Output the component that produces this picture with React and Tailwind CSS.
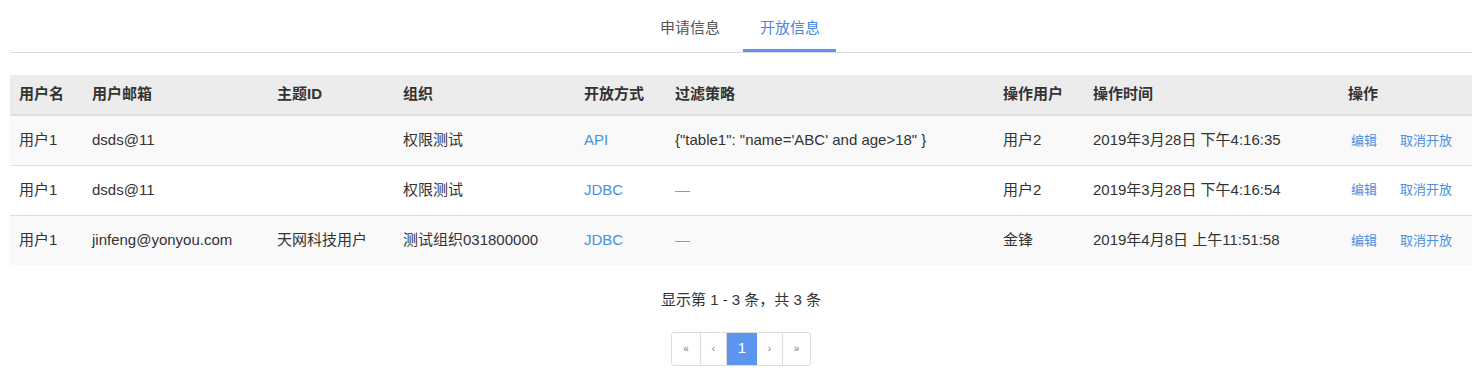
import React from 'react';

const cols = [
  { key: 'user', label: '用户名', w: 'w-[73px]' },
  { key: 'email', label: '用户邮箱', w: 'w-[185px]' },
  { key: 'topic', label: '主题ID', w: 'w-[126px]' },
  { key: 'org', label: '组织', w: 'w-[181px]' },
  { key: 'mode', label: '开放方式', w: 'w-[91px]' },
  { key: 'filter', label: '过滤策略', w: 'w-[328px]' },
  { key: 'opUser', label: '操作用户', w: 'w-[90px]' },
  { key: 'opTime', label: '操作时间', w: 'w-[255px]' },
  { key: 'action', label: '操作', w: 'w-[133px]' },
];

const rows = [
  {
    id: 1,
    user: '用户1',
    email: 'dsds@11',
    topic: '',
    org: '权限测试',
    mode: 'API',
    filter: '{"table1": "name=\'ABC\' and age>18" }',
    opUser: '用户2',
    opTime: '2019年3月28日 下午4:16:35',
  },
  {
    id: 2,
    user: '用户1',
    email: 'dsds@11',
    topic: '',
    org: '权限测试',
    mode: 'JDBC',
    filter: null,
    opUser: '用户2',
    opTime: '2019年3月28日 下午4:16:54',
  },
  {
    id: 3,
    user: '用户1',
    email: 'jinfeng@yonyou.com',
    topic: '天网科技用户',
    org: '测试组织031800000',
    mode: 'JDBC',
    filter: null,
    opUser: '金锋',
    opTime: '2019年4月8日 上午11:51:58',
  },
];

function Tabs() {
  return (
    <div className="flex justify-center border-b border-[#dcdcdc] ml-[10px] pr-[8px] h-[53px]">
      <div className="flex">
        <button className="pl-[22px] pr-[23px] pt-[4px] h-[52px] text-[15px] text-[#555]">申请信息</button>
        <button className="pl-[17px] pr-[16px] h-[52px] text-[15px] text-[#4a88e0] border-b-[3px] border-[#5b95ee] pt-[7px]">
          开放信息
        </button>
      </div>
    </div>
  );
}

function Pager() {
  const btn = 'h-8 flex items-center justify-center text-[10px] text-[#777] border-r border-[#ddd]';
  return (
    <div className="ml-[10px] flex flex-col items-center">
      <div className="mt-[24px] text-[15px] text-[#333]">显示第 1 - 3 条，共 3 条</div>
      <div className="mt-[20px] flex border border-[#ddd] rounded-[3px] overflow-hidden">
        <span className={`${btn} w-[29px]`}>«</span>
        <span className={`${btn} w-[26px]`}>‹</span>
        <span className="h-8 w-[30px] flex items-center justify-center text-[15px] text-white bg-[#5b95ee]">1</span>
        <span className={`${btn} w-[26px]`}>›</span>
        <span className="h-8 w-[27px] flex items-center justify-center text-[10px] text-[#777]">»</span>
      </div>
    </div>
  );
}

export default function App() {
  return (
    <div className="bg-white w-[1472px] h-[374px] overflow-hidden font-['Liberation_Sans','Noto_Sans_CJK_SC',sans-serif] text-[#333]">
      <Tabs />
      <div className="ml-[10px] mt-[22px]">
        <table className="w-[1462px] table-fixed border-collapse text-[15px]">
          <thead>
            <tr className="bg-[#ececec] h-[40px] border-b-2 border-[#dedede]">
              {cols.map((c) => (
                <th key={c.key} className={`${c.w} text-left font-bold pl-[9px] text-[#333]`}>
                  {c.label}
                </th>
              ))}
            </tr>
          </thead>
          <tbody>
            {rows.map((r, i) => (
              <tr
                key={r.id}
                className={`h-[50px] ${i % 2 === 0 ? 'bg-[#f9f9f9]' : 'bg-white'} ${
                  i < rows.length - 1 ? 'border-b border-[#dedede]' : ''
                }`}
              >
                <td className="pl-[9px]">{r.user}</td>
                <td className="pl-[9px]">{r.email}</td>
                <td className="pl-[9px]">{r.topic}</td>
                <td className="pl-[9px]">{r.org}</td>
                <td className="pl-[9px] text-[#4a90e2]">{r.mode}</td>
                <td className="pl-[9px]">{r.filter ? r.filter : <span className="text-[#999]">—</span>}</td>
                <td className="pl-[9px]">{r.opUser}</td>
                <td className="pl-[9px]">{r.opTime}</td>
                <td className="pl-[12px]">
                  <div className="flex gap-[23px] text-[13px] text-[#4a90e2]">
                    <a>编辑</a>
                    <a>取消开放</a>
                  </div>
                </td>
              </tr>
            ))}
          </tbody>
        </table>
      </div>
      <Pager />
    </div>
  );
}
